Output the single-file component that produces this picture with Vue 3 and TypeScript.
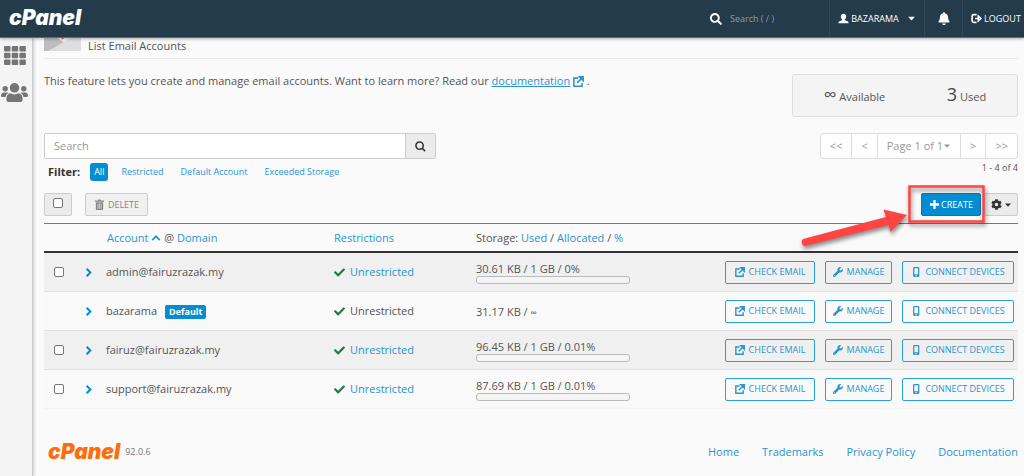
<script setup lang="ts">
import { ref, computed, defineComponent, h } from 'vue'

interface Glyph { box: string; d: string; line?: number }

const glyphs: Record<string, Glyph> = {
  search: { box: '0 0 512 512', d: 'M505 442.7L405.3 343c-4.500-4.500-10.600-7-17-7H372c27.600-35.300 44-79.700 44-128C416 93.100 322.900 0 208 0S0 93.100 0 208s93.100 208 208 208c48.300 0 92.700-16.400 128-44v16.300c0 6.400 2.500 12.500 7 17l99.700 99.700c9.400 9.400 24.600 9.400 33.900 0l28.300-28.300c9.400-9.400 9.400-24.600.1-34zM208 336c-70.700 0-128-57.200-128-128 0-70.700 57.200-128 128-128 70.700 0 128 57.200 128 128 0 70.700-57.200 128-128 128z' },
  lens: { box: '0 0 12 12', d: 'M9 5A4 4 0 1 1 1 5A4 4 0 1 1 9 5M8 8L11 11', line: 1.7 },
  wrench: { box: '0 0 512 512', d: 'M507.730 109.100c-2.240-9.030-13.540-12.090-20.120-5.510l-74.360 74.360-67.880-11.310-11.310-67.880 74.360-74.360c6.620-6.620 3.430-17.900-5.660-20.160-47.380-11.740-99.550.91-136.580 37.930-39.640 39.640-50.550 97.100-34.050 147.200L18.740 402.760c-24.990 24.990-24.990 65.510 0 90.500 24.990 24.990 65.510 24.990 90.500 0l213.210-213.210c50.120 16.710 107.470 5.680 147.370-34.220 37.070-37.070 49.700-89.320 37.910-136.730zM64 472c-13.250 0-24-10.750-24-24 0-13.260 10.750-24 24-24s24 10.740 24 24c0 13.250-10.750 24-24 24z' },
  cog: { box: '0 0 512 512', d: 'M487.4 315.7l-42.6-24.6c4.3-23.2 4.3-47 0-70.2l42.6-24.6c4.9-2.8 7.1-8.6 5.5-14-11.1-35.6-30-67.8-54.7-94.6-3.8-4.1-10-5.1-14.8-2.3L380.8 110c-17.9-15.4-38.5-27.3-60.8-35.1V25.8c0-5.6-3.9-10.5-9.4-11.700-36.7-8.2-74.3-7.8-109.2 0-5.5 1.2-9.4 6.1-9.4 11.7V75c-22.2 7.9-42.8 19.8-60.8 35.1L88.7 85.5c-4.9-2.800-11-1.9-14.8 2.3-24.7 26.7-43.6 58.9-54.7 94.6-1.7 5.4.6 11.200 5.500 14L67.3 221c-4.3 23.200-4.300 47 0 70.200l-42.6 24.6c-4.9 2.800-7.100 8.600-5.500 14 11.100 35.600 30 67.800 54.700 94.600 3.800 4.100 10 5.100 14.800 2.300l42.600-24.600c17.900 15.400 38.500 27.300 60.800 35.100v49.200c0 5.600 3.900 10.500 9.400 11.700 36.700 8.200 74.300 7.800 109.200 0 5.500-1.200 9.400-6.100 9.400-11.700v-49.200c22.200-7.900 42.800-19.800 60.800-35.100l42.600 24.600c4.900 2.800 11 1.900 14.800-2.300 24.700-26.700 43.600-58.900 54.700-94.600 1.500-5.500-.7-11.300-5.600-14.100zM256 336c-44.100 0-80-35.900-80-80s35.900-80 80-80 80 35.900 80 80-35.900 80-80 80z' },
  check: { box: '0 0 512 512', d: 'M173.898 439.404l-166.4-166.4c-9.997-9.997-9.997-26.206 0-36.204l36.203-36.204c9.997-9.998 26.207-9.998 36.204 0L192 312.690 432.095 72.596c9.997-9.997 26.207-9.997 36.204 0l36.203 36.204c9.997 9.997 9.997 26.206 0 36.204l-294.400 294.401c-9.998 9.997-26.207 9.997-36.204-.001z' },
  bell: { box: '0 0 448 512', d: 'M224 512c35.320 0 63.970-28.650 63.970-64H160.030c0 35.350 28.650 64 63.970 64zm215.390-149.710c-19.320-20.760-55.470-51.990-55.470-154.290 0-77.700-54.480-139.900-127.940-155.160V32c0-17.670-14.320-32-31.980-32s-31.980 14.330-31.980 32v20.840C118.560 68.100 64.080 130.300 64.080 208c0 102.300-36.150 133.530-55.470 154.290-6 6.450-8.660 14.160-8.610 21.710.11 16.400 12.980 32 32.100 32h383.800c19.120 0 32-15.600 32.100-32 .05-7.550-2.610-15.270-8.610-21.710z' },
  user: { box: '0 0 12 12', d: 'M6 0.700C8 0.700 9 2 8.900 4C8.800 5.600 8 6.500 7.500 7.200V8L11 9.400Q11.500 9.700 11.500 11.300H.5Q.5 9.700 1 9.400L4.500 8V7.200C4 6.500 3.200 5.600 3.100 4C3 2 4 .7 6 .7Z' },
  grid: { box: '0 0 22 19', d: 'M1 0h4.500q1 0 1 1v3.500q0 1-1 1H1q-1 0-1-1V1q0-1 1-1zM8.700 0h4.500q1 0 1 1v3.500q0 1-1 1H8.700q-1 0-1-1V1q0-1 1-1zM16.400 0h4.500q1 0 1 1v3.500q0 1-1 1h-4.500q-1 0-1-1V1q0-1 1-1zM1 6.700h4.500q1 0 1 1v3.500q0 1-1 1H1q-1 0-1-1V7.700q0-1 1-1zM8.700 6.700h4.500q1 0 1 1v3.500q0 1-1 1H8.700q-1 0-1-1V7.700q0-1 1-1zM16.400 6.700h4.500q1 0 1 1v3.500q0 1-1 1h-4.500q-1 0-1-1V7.700q0-1 1-1zM1 13.400h4.500q1 0 1 1v3.500q0 1-1 1H1q-1 0-1-1v-3.500q0-1 1-1zM8.700 13.400h4.500q1 0 1 1v3.500q0 1-1 1H8.700q-1 0-1-1v-3.500q0-1 1-1zM16.400 13.400h4.500q1 0 1 1v3.500q0 1-1 1h-4.500q-1 0-1-1v-3.500q0-1 1-1z' },
  users: { box: '0 0 27 20', d: 'M13.500 0a4.800 4.800 0 1 1 0 9.600a4.800 4.800 0 0 1 0-9.600zM4.200 3a2.700 2.700 0 1 1 0 5.400a2.700 2.700 0 0 1 0-5.400zM22.800 3a2.700 2.700 0 1 1 0 5.400a2.700 2.700 0 0 1 0-5.400zM9.500 10.300Q13.500 12.600 17.500 10.300Q21.600 11 21.600 16V17Q21.600 19 19.500 19H7.500Q5.400 19 5.400 17V16Q5.400 11 9.500 10.300zM2.700 9.500H6.500L7.300 10Q4.900 11.200 4.500 14H1.200Q0 14 0 12.800Q0 9.800 2.700 9.500zM24.300 9.500H20.500L19.700 10Q22.100 11.200 22.500 14H25.800Q27 14 27 12.800Q27 9.800 24.300 9.500z' },
  launch: { box: '0 0 12 12', d: 'M5.500 2.300H1V11.100H9.800V7.500M4.500 7.500L10 2M7 .9H11.100V5Z', line: 1.700 },
  logout: { box: '0 0 12 12', d: 'M6 1.800H3Q1.200 1.800 1.200 3.500V8.500Q1.200 10.200 3 10.200H6M4.500 6H9M8 3.500L10.700 6L8 8.500Z', line: 1.800 },
  trash: { box: '0 0 12 12', d: 'M1 1.500H4.200L5 .5H7L7.800 1.500H11V3H1ZM2 3.500H10V11Q10 12 9 12H3Q2 12 2 11ZM4 5V10.500H4.700V5ZM5.700 5V10.500H6.400V5ZM7.400 5V10.500H8.100V5Z' },
  phone: { box: '0 0 12 12', d: 'M4 0H8.500Q10 0 10 1.500V10.500Q10 12 8.500 12H4Q2.500 12 2.500 10.500V1.500Q2.500 0 4 0ZM4 1.600V8.800H8.500V1.600ZM5.200 10V11H7.300V10Z' },
  plus: { box: '0 0 12 12', d: 'M6 1V11M1 6H11', line: 2.500 },
  right: { box: '0 0 12 12', d: 'M4 2L8 6L4 10', line: 2.200 },
  up: { box: '0 0 12 12', d: 'M1.500 8.500L6 4L10.500 8.500', line: 2.200 },
  caret: { box: '0 0 8 8', d: 'M1 2.500H7L4 5.800Z' },
}

const Icon = defineComponent({
  props: { name: { type: String, required: true } },
  setup(props) {
    return () => {
      const g = glyphs[props.name]
      return h('svg', { viewBox: g.box, class: 'icon', 'aria-hidden': 'true' }, [
        h('path', {
          d: g.d,
          fill: g.line ? 'none' : 'currentColor',
          'fill-rule': 'evenodd',
          stroke: g.line ? 'currentColor' : 'none',
          'stroke-width': g.line ?? 0,
        }),
      ])
    }
  },
})

interface Account { name: string; used: string; quota: string; percent: number | null; isDefault: boolean }

const accounts: Account[] = [
  { name: 'admin@fairuzrazak.my', used: '30.61 KB', quota: '1 GB', percent: 0, isDefault: false },
  { name: 'bazarama', used: '31.17 KB', quota: '∞', percent: null, isDefault: true },
  { name: 'fairuz@fairuzrazak.my', used: '96.45 KB', quota: '1 GB', percent: 0.01, isDefault: false },
  { name: 'support@fairuzrazak.my', used: '87.69 KB', quota: '1 GB', percent: 0.01, isDefault: false },
]

const filters = ['All', 'Restricted', 'Default Account', 'Exceeded Storage']
const activeFilter = ref('All')
const query = ref('')
const selected = ref<string[]>([])
const selectable = accounts.filter((a) => !a.isDefault).map((a) => a.name)
const allSelected = computed({
  get: () => selected.value.length === selectable.length,
  set: (on: boolean) => { selected.value = on ? [...selectable] : [] },
})
const footerLinks = ['Home', 'Trademarks', 'Privacy Policy', 'Documentation']
</script>

<template>
  <div class="page">
    <header class="topbar">
      <a class="brand" href="#">cPanel</a>
      <label class="find">
        <Icon name="search" />
        <input type="text" placeholder="Search ( / )" aria-label="Search features" />
      </label>
      <button class="top-item account-menu" type="button"><Icon name="user" />BAZARAMA<Icon name="caret" class="caret" /></button>
      <button class="top-item alerts" type="button" aria-label="Notifications"><Icon name="bell" /></button>
      <a class="top-item logout" href="#"><Icon name="logout" />LOGOUT</a>
    </header>

    <div class="body">
      <nav class="side" aria-label="Main">
        <a href="#" aria-label="Home"><Icon name="grid" class="grid-icon" /></a>
        <a href="#" aria-label="User Manager"><Icon name="users" class="users-icon" /></a>
      </nav>

      <main class="content">
        <div class="heading">
          <svg class="envelope" viewBox="0 0 37 13" aria-hidden="true">
            <path d="M0 0H37V13H0Z" fill="#dedede" />
            <path d="M0 0H14L20 4L4 13H0Z" fill="#bdbdbd" />
            <path d="M13 0H26L20 4Z" fill="#f4f4f4" />
            <path d="M17 0H20L18.500 1.500Z" fill="#e8762c" />
          </svg>
          <span>List Email Accounts</span>
        </div>

        <section class="intro">
          <p>This feature lets you create and manage email accounts. Want to learn more? Read our
            <a href="#"><u>documentation</u> <Icon name="launch" /></a> .</p>
          <div class="stats">
            <span><b>∞</b> Available</span>
            <span><b class="big">3</b> Used</span>
          </div>
        </section>

        <section class="lookup">
          <div class="lookup-left">
            <form class="search" @submit.prevent>
              <input v-model="query" type="text" placeholder="Search" aria-label="Search accounts" />
              <button type="submit" aria-label="Search"><Icon name="lens" /></button>
            </form>
            <div class="filters">
              <strong>Filter:</strong>
              <button v-for="f in filters" :key="f" type="button" :class="{ on: f === activeFilter }" @click="activeFilter = f">{{ f }}</button>
            </div>
          </div>
          <div class="paging">
            <div class="pager">
              <button type="button">&lt;&lt;</button>
              <button type="button">&lt;</button>
              <button type="button" class="page-of">Page 1 of 1<Icon name="caret" /></button>
              <button type="button">&gt;</button>
              <button type="button">&gt;&gt;</button>
            </div>
            <span class="range">1 - 4 of 4</span>
          </div>
        </section>

        <div class="actions">
          <label class="select-all"><input v-model="allSelected" type="checkbox" aria-label="Select all" /></label>
          <button class="delete" type="button"><Icon name="trash" />DELETE</button>
          <span class="create-wrap">
            <button class="create" type="button"><Icon name="plus" />CREATE</button>
            <svg class="callout" viewBox="0 0 200 76" aria-hidden="true">
              <rect x="121.500" y="7.500" width="74" height="35" fill="none" stroke="#f44" stroke-width="2.500" />
              <path d="M15 60L98 38L95.500 30.500L119 36L102.500 53L100.500 46L17 67A4 4 0 0 1 15 60Z" fill="#f44" />
            </svg>
          </span>
          <button class="settings" type="button" aria-label="Settings"><Icon name="cog" /><Icon name="caret" class="caret" /></button>
        </div>

        <table>
          <colgroup>
            <col class="c-check" /><col class="c-open" /><col class="c-name" /><col class="c-limit" /><col class="c-store" /><col />
          </colgroup>
          <thead>
            <tr>
              <th></th>
              <th></th>
              <th class="name-head"><a href="#">Account <Icon name="up" /></a> @ <a href="#">Domain</a></th>
              <th><a href="#">Restrictions</a></th>
              <th>Storage: <a href="#">Used</a> / <a href="#">Allocated</a> / <a href="#">%</a></th>
              <th></th>
            </tr>
          </thead>
          <tbody>
            <tr v-for="a in accounts" :key="a.name">
              <td class="check-cell"><input v-if="!a.isDefault" v-model="selected" type="checkbox" :value="a.name" :aria-label="a.name" /></td>
              <td><button class="open" type="button" :aria-label="'Expand ' + a.name"><Icon name="right" /></button></td>
              <td>{{ a.name }}<span v-if="a.isDefault" class="badge">Default</span></td>
              <td>
                <span class="limit"><Icon name="check" /><span v-if="a.isDefault">Unrestricted</span><a v-else href="#">Unrestricted</a></span>
              </td>
              <td class="storage">
                <template v-if="a.percent !== null">
                  {{ a.used }} / {{ a.quota }} / {{ a.percent }}%
                  <div class="meter"><i :style="{ width: a.percent + '%' }"></i></div>
                </template>
                <template v-else>{{ a.used }} / <small>{{ a.quota }}</small></template>
              </td>
              <td>
                <div class="row-actions">
                  <button class="b-mail" type="button"><Icon name="launch" />CHECK EMAIL</button>
                  <button class="b-manage" type="button"><Icon name="wrench" />MANAGE</button>
                  <button class="b-connect" type="button"><Icon name="phone" />CONNECT DEVICES</button>
                </div>
              </td>
            </tr>
          </tbody>
        </table>

        <footer>
          <a class="brand orange" href="#">cPanel</a>
          <span class="version">92.0.6</span>
          <nav aria-label="Footer"><a v-for="l in footerLinks" :key="l" href="#">{{ l }}</a></nav>
        </footer>
      </main>
    </div>
  </div>
</template>

<style>
html, body { background: #fafafa; }
</style>

<style scoped>
.page { display: flex; flex-direction: column; min-height: 100vh; overflow: hidden; font: 11px/18px "Open Sans", "Noto Sans", sans-serif; color: #555; }
* { box-sizing: border-box; }
button, input { font: inherit; color: inherit; margin: 0; padding: 0; border: 0; background: none; }
button { display: inline-flex; align-items: center; justify-content: center; cursor: pointer; white-space: nowrap; }
a { color: #2a94cf; text-decoration: none; }
:deep(.icon) { width: 11px; height: 11px; flex: none; }
input[type="checkbox"] { appearance: none; display: block; width: 10px; height: 10px; border: 1px solid #767676; border-radius: 2px; background: #fff; }
input[type="checkbox"]:checked { background: #058dd3; }

.topbar { display: flex; align-items: stretch; height: 38px; background: #243b4b; color: #fff; border-bottom: 1px solid #5b6b77; box-shadow: 0 1px 3px rgba(0, 0, 0, .3); position: relative; z-index: 1; font-size: 9px; }
.brand { font: italic 900 21px/24px Inter, "Open Sans", sans-serif; color: #fff; }
.topbar .brand { margin: 6px auto 0 9px; }
.find { display: flex; align-items: center; gap: 8px; width: 119px; }
.find :deep(.icon) { width: 12px; height: 12px; }
.find input { width: 90px; outline: 0; }
.find input::placeholder { color: #8f9ba3; opacity: 1; }
.top-item { display: flex; align-items: center; justify-content: center; gap: 2px; border-left: 1px solid #31495a; color: #fff; }
.account-menu { width: 95px; }
.account-menu .caret { width: 9px; height: 9px; margin-left: 6px; }
.alerts { width: 38px; }
.alerts :deep(.icon) { width: 12px; height: 13px; }
.logout { width: 62px; padding-left: 5px; }

.body { display: flex; flex: 1; }
.side { width: 33px; flex: none; background: #f4f4f4; border-right: 1px solid #ccc; box-shadow: 1px 0 3px rgba(0, 0, 0, .2); display: flex; flex-direction: column; align-items: center; gap: 18px; padding: 8px 3px 0 0; }
.side a { color: #757575; display: flex; }
.grid-icon.icon { width: 22px; height: 19px; }
.users-icon.icon { width: 27px; height: 20px; }
.content { flex: 1; min-width: 0; padding: 0 6px 0 11px; }

.heading { display: flex; gap: 7px; height: 21px; border-bottom: 1px solid #ebebeb; line-height: 15px; }
.envelope { width: 37px; height: 13px; }

.intro { display: flex; justify-content: space-between; align-items: flex-start; padding-top: 15px; }
.intro p { margin: -2px 0 0; white-space: nowrap; }
.intro p :deep(.icon) { vertical-align: -2px; }
.stats { display: flex; justify-content: space-around; align-items: center; width: 226px; height: 43px; border: 1px solid #ddd; border-radius: 3px; background: #f4f4f4; }
.stats b { font-weight: 400; font-size: 18px; }
.stats .big { color: #444; }

.lookup { display: flex; justify-content: space-between; align-items: flex-start; padding-top: 16px; }
.search { display: flex; width: 392px; height: 26px; border: 1px solid #ccc; border-radius: 2px; background: #fff; }
.search input { flex: 1; padding: 0 9px; outline: 0; }
.search input::placeholder { color: #999; opacity: 1; }
.search button { width: 30px; background: #ebebeb; border-left: 1px solid #ccc; color: #333; }
.filters { display: flex; align-items: center; gap: 9px; height: 18px; margin: 4px 0 0 4px; font-size: 9px; }
.filters strong { font-size: 11px; color: #333; margin-right: 1px; }
.filters button { height: 18px; padding: 0 4px; border-radius: 3px; color: #2a94cf; }
.filters .on { background: #058dd3; color: #fff; }
.paging { display: flex; flex-direction: column; align-items: flex-end; }
.pager { display: flex; height: 26px; border: 1px solid #ddd; border-radius: 3px; background: #fff; color: #999; }
.pager button { padding: 0 9px; }
.pager button + button { border-left: 1px solid #ddd; }
.pager :deep(.icon) { width: 8px; height: 8px; }
.range { font-size: 9px; }

.actions { display: flex; height: 23px; margin-top: 12px; font-size: 9px; }
.select-all { width: 28px; padding: 4px 8px; border: 1px solid #ccc; border-radius: 2px; background: #ebebeb; }
.delete { width: 63px; margin-left: 13px; gap: 3px; border: 1px solid #ccc; border-radius: 2px; background: #f0f0f0; color: #888; }
.create-wrap { position: relative; display: flex; margin-left: auto; }
.create { width: 60px; gap: 1px; border: 1px solid #0479b5; border-radius: 2px; background: #058dd3; color: #fff; }
.callout { position: absolute; left: -133px; top: -14px; width: 200px; height: 76px; filter: drop-shadow(1px 3px 2px rgba(0, 0, 0, .45)); z-index: 1; pointer-events: none; }
.settings { width: 34px; margin-left: 3px; gap: 2px; border: 1px solid #ccc; border-radius: 2px; background: #ebebeb; color: #333; }
.settings .caret { width: 8px; height: 8px; }

table { width: 100%; margin-top: 7px; border-collapse: separate; border-spacing: 0; table-layout: fixed; border-top: 1px solid #777; }
.c-check { width: 39px; }
.c-open { width: 23px; }
.c-name { width: 228px; }
.c-limit { width: 142px; }
.c-store { width: 200px; }
th, td { padding: 0; text-align: left; font-weight: 400; white-space: nowrap; }
th { height: 29px; border-bottom: 2px solid #333; }
.name-head { padding-left: 1px; }
th :deep(.icon) { width: 10px; height: 10px; vertical-align: -1px; }
td { height: 39px; border-bottom: 1px solid #e2e2e2; background: #f9f9f9; }
tbody tr:nth-child(odd) td { background: #f0f0f0; }
tbody tr:last-child td { border-bottom-color: #f4f4f4; }
.check-cell { padding-left: 10px; }
.open { display: flex; width: 10px; color: #058dd3; }
.badge { display: inline-block; margin-left: 8px; padding: 0 4px; border-radius: 2px; background: #058dd3; color: #fff; font-weight: 700; font-size: 9px; line-height: 14px; }
.limit { display: flex; align-items: center; gap: 5px; }
.limit :deep(.icon) { color: #1c7a44; }
td.storage { line-height: 14px; padding-top: 2px; }
.storage small { font-size: 9px; }
.meter { width: 154px; height: 8px; border: 1px solid #bbb; border-radius: 3px; background: #f5f5f5; overflow: hidden; }
.meter i { display: block; height: 100%; background: #058dd3; }
.row-actions { display: flex; justify-content: flex-end; gap: 10px; padding-right: 4px; font-size: 9px; }
.row-actions button { height: 23px; gap: 4px; border: 1px solid #2a9fd8; border-radius: 2px; color: #2a94cf; }
.row-actions :deep(.icon) { width: 10px; height: 10px; }
.b-mail { width: 90px; }
.b-manage { width: 67px; }
.b-connect { width: 112px; }

footer { display: flex; align-items: center; padding: 31px 0 0 4px; }
.orange { color: #ff6c0c; }
.version { margin-left: 5px; font-size: 9px; color: #777; }
footer nav { display: flex; gap: 23px; margin-left: auto; }
</style>
